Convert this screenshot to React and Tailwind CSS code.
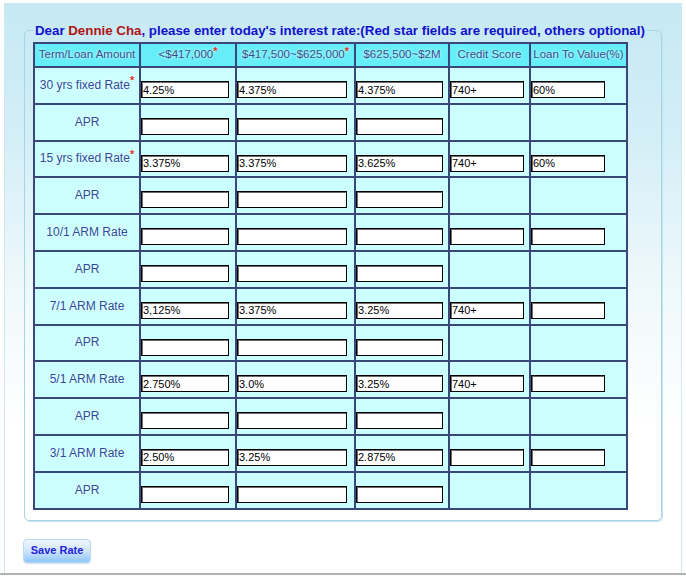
const cols = [
  { label: '<$417,000', req: true },
  { label: '$417,500~$625,000', req: true },
  { label: '$625,500~$2M' },
  { label: 'Credit Score' },
  { label: 'Loan To Value(%)' },
];

const inputWidths = ['w-[88px]', 'w-[110px]', 'w-[87px]', 'w-[74px]', 'w-[74px]'];

const rates = [
  { label: '30 yrs fixed Rate', req: true, vals: ['4.25%', '4.375%', '4.375%', '740+', '60%'] },
  { label: '15 yrs fixed Rate', req: true, vals: ['3.375%', '3.375%', '3.625%', '740+', '60%'] },
  { label: '10/1 ARM Rate', vals: ['', '', '', '', ''] },
  { label: '7/1 ARM Rate', vals: ['3,125%', '3.375%', '3.25%', '740+', ''] },
  { label: '5/1 ARM Rate', vals: ['2.750%', '3.0%', '3.25%', '740+', ''] },
  { label: '3/1 ARM Rate', vals: ['2.50%', '3.25%', '2.875%', '', ''] },
];

function Star() {
  return <span className="relative -top-[4px] text-[11px] font-bold leading-none text-[#e0302a]">*</span>;
}

function RateInput({ i, value }) {
  return (
    <input
      defaultValue={value}
      className={`${inputWidths[i]} block h-[17px] border border-black bg-white pl-[1px] text-[11px] leading-[15px] text-black outline-none shadow-[inset_1px_1px_0_#6b6b6b]`}
    />
  );
}

function LabelCell({ children }) {
  return (
    <div className="flex items-center justify-center bg-[#ccffff] pb-[1px] text-[12px] text-[#2d4c9a] [text-shadow:0_0_3px_#ffffff]">
      {children}
    </div>
  );
}

export default function App() {
  return (
    <div className="h-[576px] w-[686px] overflow-hidden bg-white font-['Liberation_Sans',Arial,sans-serif]">
      <div className="ml-[4px] mt-[3px] h-[570px] w-[678px] border border-b-0 border-[#cfe7ef] bg-[linear-gradient(to_bottom,#c6e9f4_0px,#d3eef7_130px,#eef8fb_280px,#ffffff_420px)]">
        <fieldset className="ml-[19px] mt-[19px] w-[638px] rounded-[5px] border border-[#a6d5e5] px-[8px] pb-[10px] pt-[4px] shadow-[1px_1px_0_#c4e5ef]">
          <legend className="px-[2px] text-[13.3px] font-bold leading-[15px] text-[#1111cc]">
            Dear <span className="text-[#b01414]">Dennie Cha</span>, please enter today's interest rate:(Red star fields are required, others optional)
          </legend>

          <div className="grid w-[595px] grid-cols-[104px_94px_117px_92px_79px_95px] grid-rows-[22px_repeat(12,34.8px)] gap-[2px] bg-[#3a477a] p-[2px]">
            <div className="flex items-center justify-center bg-[#66eef8] text-[11.5px] text-[#384c8c] [text-shadow:0_0_3px_#ffffff]">
              Term/Loan Amount
            </div>
            {cols.map((c) => (
              <div key={c.label} className="flex items-center justify-center bg-[#66eef8] text-[11.5px] text-[#384c8c] [text-shadow:0_0_3px_#ffffff]">
                {c.label}
                {c.req && <Star />}
              </div>
            ))}

            {rates.map((r) => (
              <div key={r.label} className="contents">
                <LabelCell>
                  {r.label}
                  {r.req && <Star />}
                </LabelCell>
                {r.vals.map((v, i) => (
                  <div key={i} className="bg-[#ccffff] pt-[13px]">
                    <RateInput i={i} value={v} />
                  </div>
                ))}
                <LabelCell>APR</LabelCell>
                {[0, 1, 2, 3, 4].map((i) => (
                  <div key={i} className="bg-[#ccffff] pt-[13px]">
                    {i < 3 && <RateInput i={i} value="" />}
                  </div>
                ))}
              </div>
            ))}
          </div>
        </fieldset>

        <button className="ml-[18px] mt-[18px] h-[24px] w-[68px] rounded-[4px] border border-[#b9d9f2] bg-[linear-gradient(to_bottom,#eef6fd,#cfe5fb_50%,#8ec5fb)] text-[11px] font-bold text-[#2222dd] shadow-[0_1px_1px_#c9dff0]">
          Save Rate
        </button>
      </div>
      <div className="h-[2px] w-full bg-[#b3b3b3]" />
    </div>
  );
}
